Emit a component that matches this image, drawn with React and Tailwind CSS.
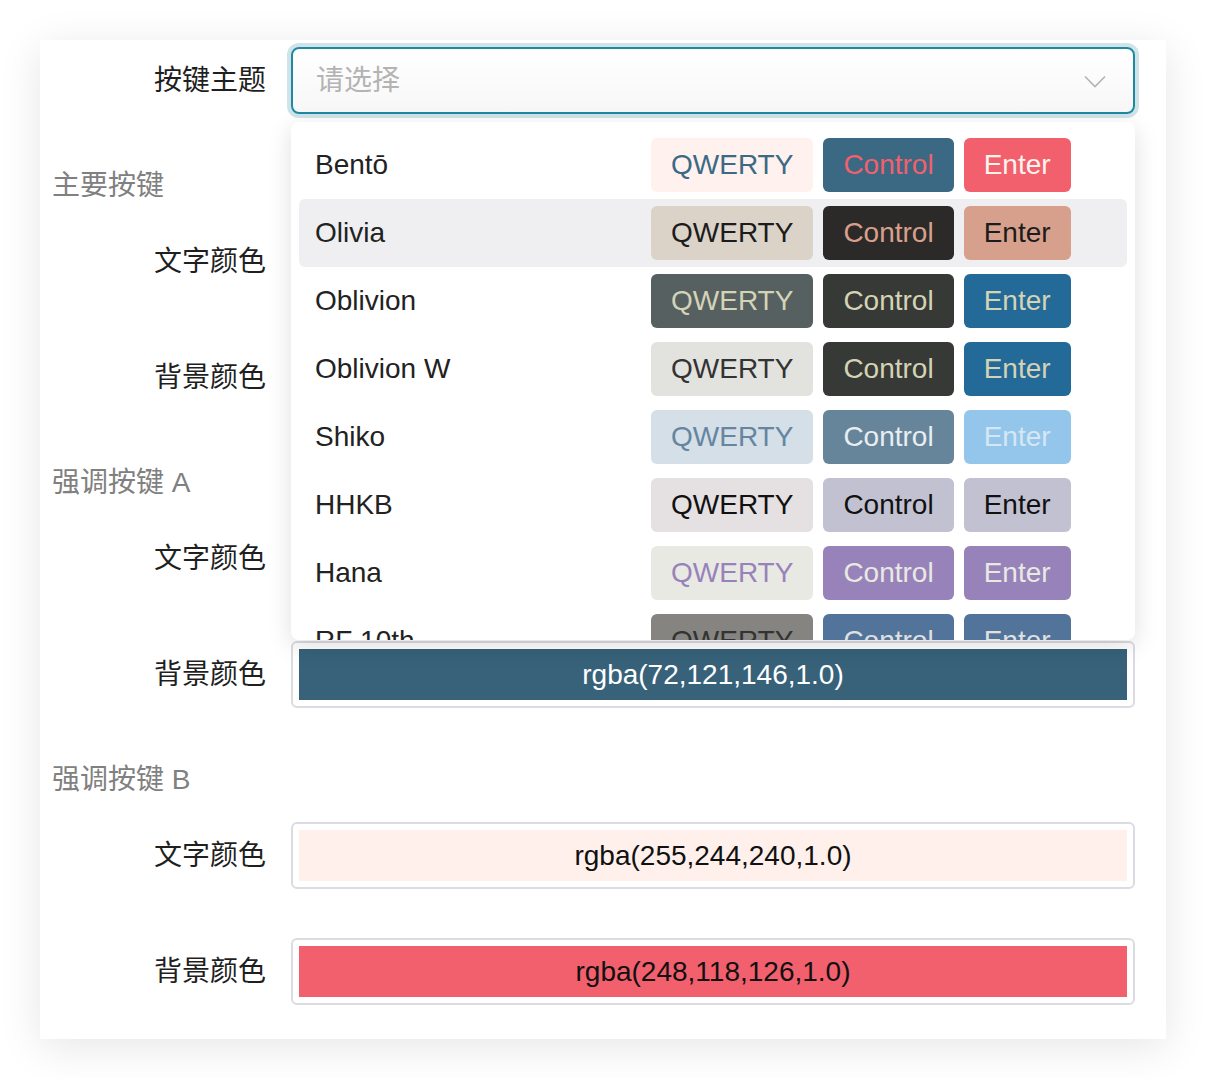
const themes = [
  { name: 'Bentō', keys: [['#fff1ed', '#3a6a85'], ['#3b6882', '#f0606e'], ['#f2606d', '#fff4f0']] },
  { name: 'Olivia', keys: [['#dbd2c8', '#1c1c1c'], ['#2c2a28', '#d8a08c'], ['#d7a08c', '#1c1c1c']], hover: true },
  { name: 'Oblivion', keys: [['#566061', '#d4d3b5'], ['#373936', '#d4d3b5'], ['#236a98', '#d4d3b5']] },
  { name: 'Oblivion W', keys: [['#e2e2de', '#333333'], ['#373936', '#d4d3b5'], ['#236a98', '#d4d3b5']] },
  { name: 'Shiko', keys: [['#d4dfe8', '#6685a0'], ['#66859a', '#e8eef2'], ['#93c6ea', '#d6e7f3']] },
  { name: 'HHKB', keys: [['#e5e0e2', '#111111'], ['#c1c1d1', '#111111'], ['#c1c1d1', '#111111']] },
  { name: 'Hana', keys: [['#e9e9e4', '#9783b9'], ['#9783b9', '#e9e9e4'], ['#9783b9', '#e9e9e4']] },
  { name: 'RF 10th', keys: [['#868480', '#333333'], ['#52739a', '#e0e0e0'], ['#52739a', '#e0e0e0']] },
];

const sans = { fontFamily: '"Liberation Sans", Arial, "Noto Sans CJK SC", sans-serif' };

function Label({ children }) {
  return (
    <div className="w-[251px] shrink-0 pr-[25px] text-right text-[28px] leading-none text-[#1f1f1f]">
      {children}
    </div>
  );
}

function Heading({ children }) {
  return (
    <div className="mb-[23px] h-[42px] pl-[12px] pt-[2px] text-[28px] leading-[42px] text-[#808080]">
      {children}
    </div>
  );
}

function ColorField({ label, bg, text, fg, last }) {
  return (
    <div className={`flex h-[67px] items-center ${last ? '' : 'mb-[49px]'}`}>
      <Label>{label}</Label>
      <div className="h-[67px] w-[844px] rounded-[6px] border-2 border-[#dcdbe1] bg-white p-[6px]">
        <div
          className="flex h-full items-center justify-center text-[28px]"
          style={{ backgroundColor: bg, color: fg }}
        >
          {text}
        </div>
      </div>
    </div>
  );
}

function Key({ label, colors }) {
  return (
    <div
      className="flex h-[54px] shrink-0 items-center rounded-[6px] px-5 text-[28px] leading-none"
      style={{ backgroundColor: colors[0], color: colors[1] }}
    >
      {label}
    </div>
  );
}

function Dropdown() {
  return (
    <div className="absolute left-0 top-[75px] z-10 h-[518px] w-[844px] overflow-hidden rounded-[8px] bg-white pt-[9px] shadow-[0_6px_24px_rgba(0,0,0,0.13)]">
      {themes.map((t) => (
        <div
          key={t.name}
          className={`mx-[8px] flex h-[68px] items-center rounded-[6px] ${t.hover ? 'bg-[#efeff1]' : ''}`}
        >
          <div className="w-[352px] shrink-0 pl-[16px] text-[28px] text-[#222222]">{t.name}</div>
          <div className="flex gap-[10px]">
            <Key label="QWERTY" colors={t.keys[0]} />
            <Key label="Control" colors={t.keys[1]} />
            <Key label="Enter" colors={t.keys[2]} />
          </div>
        </div>
      ))}
    </div>
  );
}

export default function App() {
  return (
    <div className="min-h-screen bg-white px-[40px] pt-[40px]" style={sans}>
      <div className="w-[1126px] bg-white pb-[34px] pt-[7px] shadow-[0_8px_40px_rgba(0,0,0,0.1)]">
        <div className="mb-[49px] flex h-[67px] items-center">
          <Label>按键主题</Label>
          <div className="relative w-[844px]">
            <div className="flex h-[67px] items-center justify-between rounded-[8px] border-2 border-[#1d8aa1] bg-gradient-to-b from-white to-[#f7f7f7] pl-[23px] pr-[27px] shadow-[0_0_0_4px_#cfe3e8]">
              <span className="text-[28px] text-[#b3b3b3]">请选择</span>
              <svg width="22" height="13" viewBox="0 0 22 13" className="mt-[2px]">
                <polyline points="1,1.5 11,11.5 21,1.5" fill="none" stroke="#b4b4b4" strokeWidth="1.6" />
              </svg>
            </div>
            <Dropdown />
          </div>
        </div>

        <Heading>主要按键</Heading>
        <ColorField label="文字颜色" bg="#3a6a85" text="rgba(58,106,133,1.0)" fg="#ffffff" />
        <ColorField label="背景颜色" bg="#fff0ec" text="rgba(255,244,240,1.0)" fg="#111111" />

        <Heading>强调按键 A</Heading>
        <ColorField label="文字颜色" bg="#f0606e" text="rgba(248,118,126,1.0)" fg="#111111" />
        <ColorField label="背景颜色" bg="#37627a" text="rgba(72,121,146,1.0)" fg="#ffffff" />

        <Heading>强调按键 B</Heading>
        <ColorField label="文字颜色" bg="#fff0ec" text="rgba(255,244,240,1.0)" fg="#111111" />
        <ColorField label="背景颜色" bg="#f2606d" text="rgba(248,118,126,1.0)" fg="#111111" last />
      </div>
    </div>
  );
}
